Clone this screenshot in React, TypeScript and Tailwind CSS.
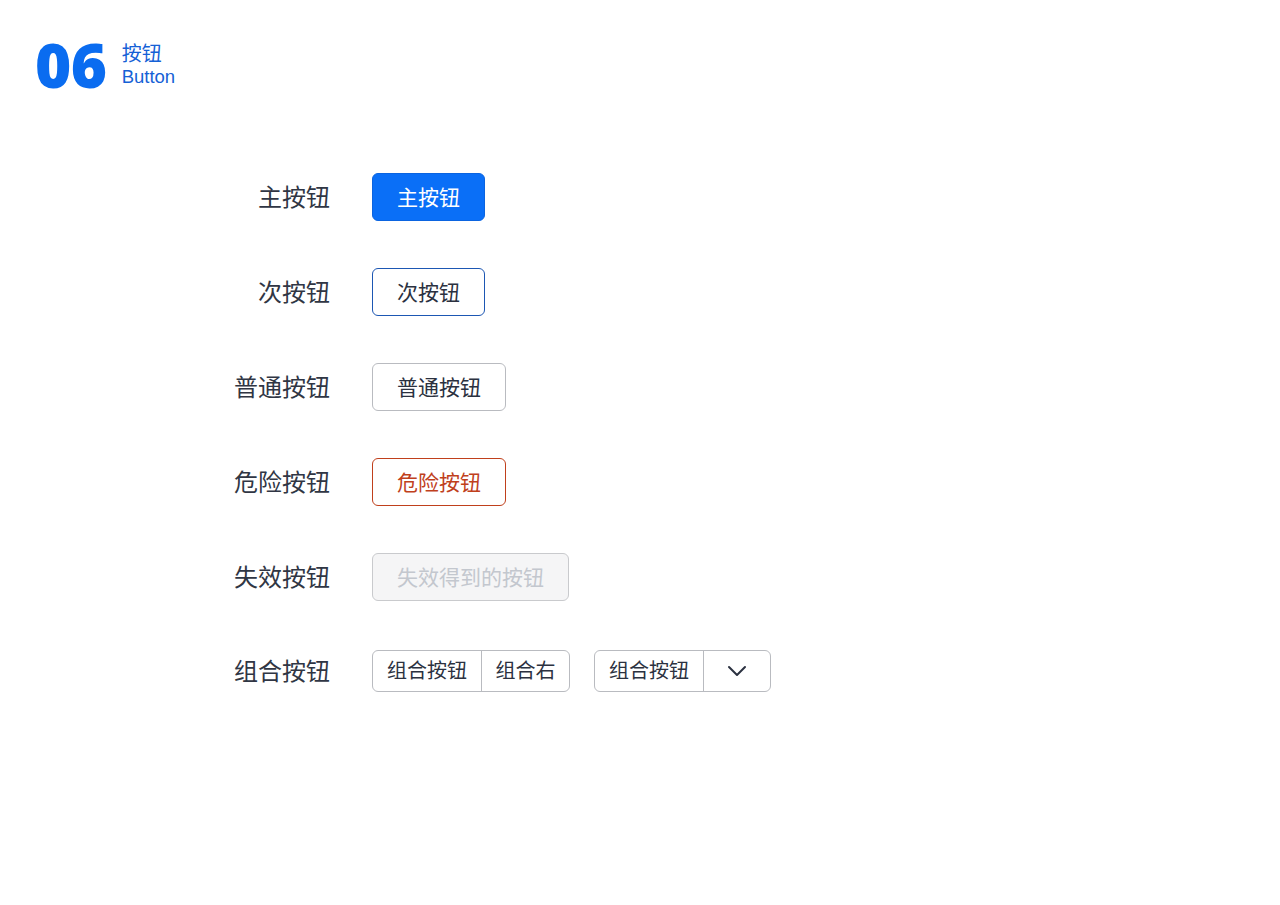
const CJK = "font-['Noto_Sans','Noto_Sans_CJK_SC',sans-serif]"

function Row({ label, className = '', children }: { label: string; className?: string; children: React.ReactNode }) {
  return (
    <div className={`flex h-12 items-center ${className}`}>
      <div className="w-[130px] text-right text-[24px] leading-none text-[#303644]">{label}</div>
      <div className="ml-[42px] flex items-center gap-6">{children}</div>
    </div>
  )
}

const btn = 'flex h-12 items-center rounded-[6px] border px-6 text-[21px] leading-none'

function Chevron() {
  return (
    <svg width="20" height="12" viewBox="0 0 20 12" fill="none" stroke="#2b3140" strokeWidth="2" strokeLinecap="round" strokeLinejoin="round">
      <path d="M2 2l8 8 8-8" />
    </svg>
  )
}

export default function App() {
  return (
    <div className={`min-h-[905px] w-[1280px] bg-white ${CJK}`}>
      {/* Section title */}
      <div className="flex items-center px-[35px] pt-[33px]">
        <span className="font-['Open_Sans',sans-serif] text-[62px] font-extrabold leading-none tracking-[-0.5px] text-[#0a6cf0]">06</span>
        <div className="ml-[15px] flex flex-col text-[#1561d6]">
          <span className="text-[20px] leading-[24px]">按钮</span>
          <span className="font-['Liberation_Sans',sans-serif] text-[18.5px] leading-[21px]">Button</span>
        </div>
      </div>

      <div className="mt-[78px] flex flex-col gap-[47px] pl-[200px]">
        <Row label="主按钮">
          <button className={`${btn} border-[#0b64e0] bg-[#0a6ff7] text-white`}>主按钮</button>
        </Row>
        <Row label="次按钮">
          <button className={`${btn} border-[#1d57b3] border-[1.5px] bg-white text-[#2b3140]`}>次按钮</button>
        </Row>
        <Row label="普通按钮">
          <button className={`${btn} border-[#b9bbc0] bg-white text-[#2b3140]`}>普通按钮</button>
        </Row>
        <Row label="危险按钮">
          <button className={`${btn} border-[#c0401c] border-[1.5px] bg-white text-[#c0401c]`}>危险按钮</button>
        </Row>
        <Row label="失效按钮">
          <button className={`${btn} border-[#c9cacd] bg-[#f5f5f6] text-[#c3c7ce]`}>失效得到的按钮</button>
        </Row>
        <Row label="组合按钮" className="-mt-[1px]">
          <div className="flex h-[42px] overflow-hidden rounded-[6px] border border-[#b9bbc0] text-[20px] leading-none text-[#2b3140]">
            <span className="flex w-[109px] items-center justify-center border-r border-[#b9bbc0]">组合按钮</span>
            <span className="flex w-[87px] items-center justify-center">组合右</span>
          </div>
          <div className="flex h-[42px] overflow-hidden rounded-[6px] border border-[#b9bbc0] text-[20px] leading-none text-[#2b3140]">
            <span className="flex w-[109px] items-center justify-center border-r border-[#b9bbc0]">组合按钮</span>
            <span className="flex w-[66px] items-center justify-center"><Chevron /></span>
          </div>
        </Row>
      </div>
    </div>
  )
}
